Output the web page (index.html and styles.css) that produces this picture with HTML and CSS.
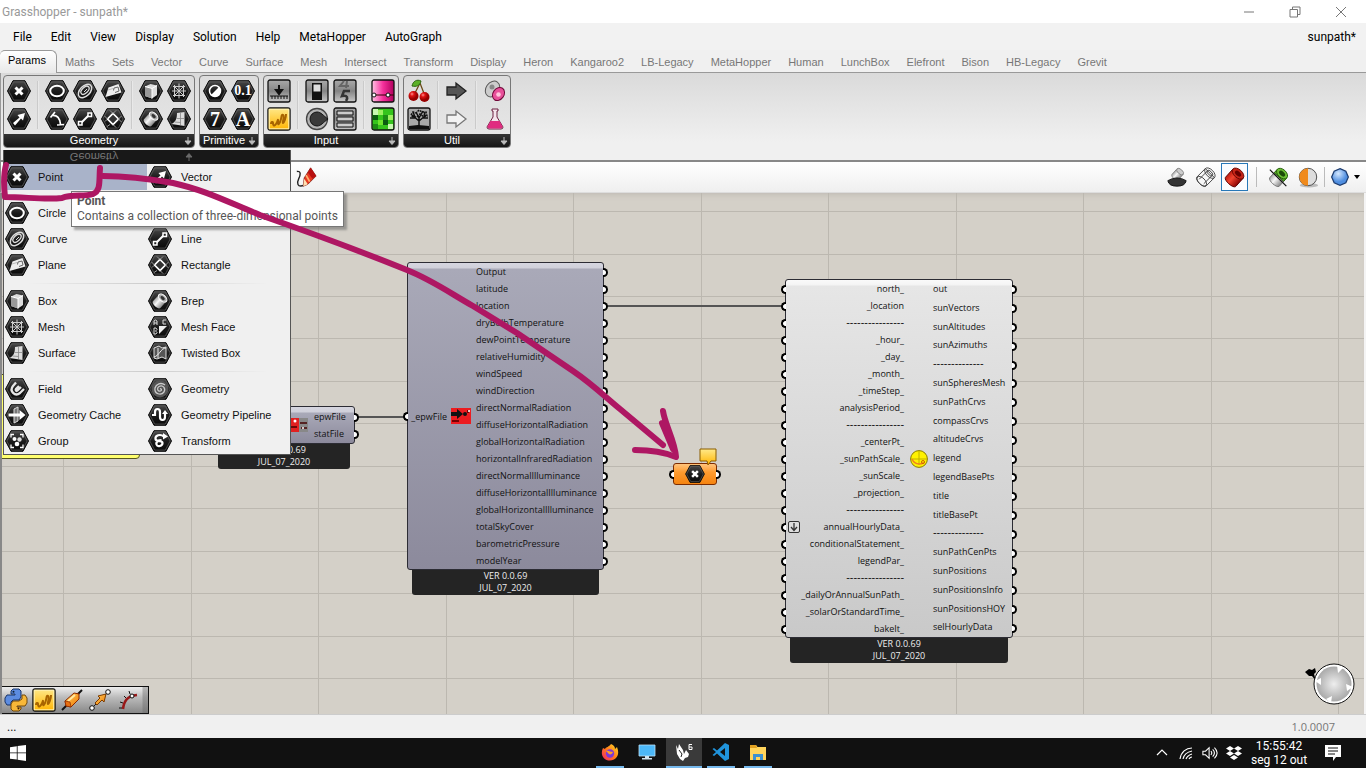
FILE: index.html
```html
<!DOCTYPE html>
<html lang="en">
<head>
<meta charset="utf-8">
<title>Grasshopper - sunpath*</title>
<link rel="stylesheet" href="styles.css">
</head>
<body>
<svg class="defs" aria-hidden="true">
  <defs>
    <linearGradient id="gHex" x1="0" y1="0" x2="0" y2="1"><stop offset="0" stop-color="#4a4a4a"/><stop offset=".5" stop-color="#1c1c1c"/><stop offset="1" stop-color="#080808"/></linearGradient>
    <linearGradient id="gBtn" x1="0" y1="0" x2="0" y2="1"><stop offset="0" stop-color="#aaa"/><stop offset=".5" stop-color="#858585"/><stop offset="1" stop-color="#c8c8c8"/></linearGradient>
    <linearGradient id="gSteel" x1="0" y1="0" x2="0" y2="1"><stop offset="0" stop-color="#aaa"/><stop offset=".4" stop-color="#f8f8f8"/><stop offset="1" stop-color="#888"/></linearGradient>
    <linearGradient id="gYel" x1="0" y1="0" x2="0" y2="1"><stop offset="0" stop-color="#ffe98a"/><stop offset="1" stop-color="#ffb400"/></linearGradient>
    <linearGradient id="gPink" x1="0" y1="0" x2="1" y2="0"><stop offset="0" stop-color="#ffc4e4"/><stop offset=".5" stop-color="#f5309c"/><stop offset="1" stop-color="#b0005c"/></linearGradient>
    <linearGradient id="gRed" x1="0" y1="0" x2="0" y2="1"><stop offset="0" stop-color="#c01c10"/><stop offset=".4" stop-color="#f04430"/><stop offset="1" stop-color="#8c0404"/></linearGradient>
    <linearGradient id="gOr" x1="0" y1="0" x2="1" y2="1"><stop offset="0" stop-color="#ffcf60"/><stop offset="1" stop-color="#f07800"/></linearGradient>
    <radialGradient id="gBlue" cx=".4" cy=".3"><stop offset="0" stop-color="#d4e8ff"/><stop offset="1" stop-color="#4f8ee0"/></radialGradient>
    <radialGradient id="gCherry" cx=".35" cy=".3"><stop offset="0" stop-color="#ff9090"/><stop offset=".4" stop-color="#e01414"/><stop offset="1" stop-color="#980000"/></radialGradient>
    <radialGradient id="gCompass"><stop offset="0" stop-color="#eee"/><stop offset="1" stop-color="#a9a9a9"/></radialGradient>
    <linearGradient id="gFox" x1="1" y1="0" x2="0" y2="1"><stop offset="0" stop-color="#ffe226"/><stop offset=".5" stop-color="#ff7a1a"/><stop offset="1" stop-color="#f0206c"/></linearGradient>
    <g id="hex"><path d="M.5 11 6 .7h12L23.500 11 18 21.300H6z" fill="url(#gHex)" stroke="#0a0a0a"/><path d="M1.800 11 6.700 1.900h10.600L22.200 11 17.300 20.100H6.700z" fill="none" stroke="#666" stroke-width=".7"/></g>
  </defs>
  <symbol id="hexagon" viewBox="0 0 24 22"><use href="#hex"/></symbol>
  <symbol id="point" viewBox="0 0 24 22"><use href="#hex"/><path d="M8.500 7.500l7 7M15.500 7.500l-7 7" stroke="#fff" stroke-width="3"/></symbol>
  <symbol id="vector" viewBox="0 0 24 22"><use href="#hex"/><path d="M6 15l6.500-5.500-2-2.500 7.500-2-2 7.500-2-2L8 17.500z" fill="#fff"/></symbol>
  <symbol id="circle" viewBox="0 0 24 22"><use href="#hex"/><ellipse cx="12" cy="11" rx="6.800" ry="5.200" fill="none" stroke="#fff" stroke-width="2"/></symbol>
  <symbol id="arc" viewBox="0 0 24 22"><use href="#hex"/><path d="M5.500 9.500L10 4M6.500 7.500c6-1 8.500 3 9 9M12 17l7-.5" fill="none" stroke="#fff" stroke-width="1.700"/></symbol>
  <symbol id="curve" viewBox="0 0 24 22"><use href="#hex"/><g fill="none" stroke="#ddd"><ellipse cx="12" cy="11" rx="8" ry="5" transform="rotate(-45 12 11)" stroke-width="1.500"/><ellipse cx="12.500" cy="10.500" rx="5" ry="2.800" transform="rotate(-45 12 11)" stroke-width="1.300"/><path d="M11 12l3-3"/></g></symbol>
  <symbol id="line" viewBox="0 0 24 22"><use href="#hex"/><path d="M8 15l8-8" stroke="#fff" stroke-width="2"/><path d="M5.500 13.500H9V17H5.500zM15 5h3.500v3.500H15z" fill="#222" stroke="#fff" stroke-width="1.500"/></symbol>
  <symbol id="plane" viewBox="0 0 24 22"><use href="#hex"/><path d="M7.500 7.500L17.500 4l3 8.500L4.500 17z" fill="#eee"/><path d="M12.500 10.500l.5-2.500 4-1 1 4-4 1.500" fill="none" stroke="#666"/><path d="M7 10l5-1.500" stroke="#bbb"/></symbol>
  <symbol id="rect" viewBox="0 0 24 22"><use href="#hex"/><path d="M12 5.500l5.500 5.500-5.500 5.500L6.500 11z" fill="#333" stroke="#fff" stroke-width="1.700"/><path d="M5.500 12l-1.500 1.500M9 16.500l-3 2M12 5.500l3-3M17.500 11l3-3M12 5.500L9 2.500M6.500 11l-3-3M12 16.500l3 3M17.500 11l3 3" stroke="#999"/></symbol>
  <symbol id="box" viewBox="0 0 24 22"><use href="#hex"/><path d="M6 6.500l5.500-2.500 6.500 1.500v9.500l-5 3.500L6 16z" fill="#ddd"/><path d="M6 6.500l7 2v10L6 16z" fill="#999"/><path d="M6 6.500l7 2 5-3M13 8.500v10" fill="none" stroke="#fff"/></symbol>
  <symbol id="mesh" viewBox="0 0 24 22"><use href="#hex"/><path d="M6 6.500h12M5 11h14M6 15.500h12M7.500 5v12M12 3.500v15M16.500 5v12M7.500 6.500l9 9M16.500 6.500l-9 9" fill="none" stroke="#ccc"/></symbol>
  <symbol id="brep" viewBox="0 0 24 22"><use href="#hex"/><g transform="rotate(-48 12 11)"><path d="M7 6h9v10H7c-3 0-3-10 0-10z" fill="url(#gSteel)"/><ellipse cx="16" cy="11" rx="3" ry="5" fill="#aaa" stroke="#fff"/><ellipse cx="16" cy="11" rx="1.500" ry="2.500" fill="#333"/></g></symbol>
  <symbol id="surface" viewBox="0 0 24 22"><use href="#hex"/><path d="M10 5l7.500-1v14L4.500 16c4-2 5.500-5 5.500-11z" fill="#ddd"/><path d="M13.500 5v12M9.500 10.500h8M7.500 14l6 .5" stroke="#888" fill="none" stroke-width=".8"/></symbol>
  <symbol id="meshface" viewBox="0 0 24 22"><use href="#hex"/><path d="M11 10h8l-8 8z" fill="#eee"/><path d="M6 9V5l1.500-1L9 5v4M6 7h3M18 4h-3v4h3M6 12v6h2l1-1.500L7.500 15 9 13.500 8 12z" fill="none" stroke="#ddd"/></symbol>
  <symbol id="twisted" viewBox="0 0 24 22"><use href="#hex"/><path d="M6 6l5-2 3 2 4-1v12l-4-2-5 2-3-1z" fill="#555" stroke="#ddd"/><path d="M6 15c5-1 7-9 12-9M10 6v10" fill="none" stroke="#eee"/></symbol>
  <symbol id="field" viewBox="0 0 24 22"><use href="#hex"/><path d="M11 4.500L8 8c-4 5 2 11 7 7l4-4M14 8l-3 3c-1 1.500.5 2.500 1.500 1.500L16 9" fill="none" stroke="#e6e6e6" stroke-width="2.300"/></symbol>
  <symbol id="spiral" viewBox="0 0 24 22"><use href="#hex"/><circle cx="12" cy="11" r="8.500" fill="#555"/><path d="M12 11c1.500-1 2 1.500.5 2-3 1-4-3-1.500-4.500 4-2 7 2 5 5.500-3 4-10 2-9-4 1-4 6-6 10-3" fill="none" stroke="#ccc" stroke-width="1.300"/></symbol>
  <symbol id="cache" viewBox="0 0 24 22"><use href="#hex"/><path d="M9 5l4-2v14l-4 2z" fill="#777" stroke="#ddd"/><path d="M3.500 9.500h11V6l6 5-6 5v-3.500h-11z" fill="#fff"/></symbol>
  <symbol id="pipeline" viewBox="0 0 24 22"><use href="#hex"/><path d="M4 11h3V8c0-4 5-4 5 0v5c0 4 5 4 5 0V9" fill="none" stroke="#fff" stroke-width="2.200"/><path d="M14 10l3-4 3 4z" fill="#fff"/></symbol>
  <symbol id="group" viewBox="0 0 24 22"><use href="#hex"/><path d="M9 4.500H6v3M15 4.500h3v3M9 17.500H6v-3M15 17.500h3v-3" fill="none" stroke="#fff" stroke-width="1.300"/><circle cx="9.500" cy="9" r="2" fill="#fff"/><circle cx="14.500" cy="9.500" r="2.200" fill="#ddd"/><circle cx="12" cy="14" r="2.300" fill="#fff"/></symbol>
  <symbol id="transform" viewBox="0 0 24 22"><use href="#hex"/><path d="M16 6.500c-4-3-9-1-8.500 2.500s7 1 7 4-5 4.500-6 1.500 3-4.500 5-4.500" fill="none" stroke="#fff" stroke-width="2.200"/><path d="M15 3l5 3.500-5 3z" fill="#fff"/></symbol>
  <symbol id="bool" viewBox="0 0 24 22"><use href="#hex"/><circle cx="12" cy="11" r="5.500" fill="none" stroke="#fff" stroke-width="1.500"/><path d="M16 7a5.500 5.500 0 0 1-8 8z" fill="#fff"/></symbol>
  <symbol id="sketch" viewBox="0 0 24 24"><rect x="1" y="1" width="22" height="22" rx="2" fill="url(#gYel)" stroke="#111" stroke-width="1.400"/><rect x="2.200" y="2.200" width="19.600" height="19.600" fill="none" stroke="#fff3b8"/><path d="M4 17c0-2 2-3 2-1s1 4 3 1 2-6 2-3 0 5 2 1 1-8 3-7-1 8 0 8 3-5 3-9" fill="none" stroke="#a86400" stroke-width="2"/></symbol>
  <symbol id="chev" viewBox="0 0 8 8"><path d="M4 0v4M1 4h6L4 7.500z" stroke="#bbb" fill="#bbb"/></symbol>
</svg>

<div class="app">
  <header class="titlebar">
    <span>Grasshopper - sunpath*</span>
    <div class="winbtns">
      <button aria-label="Minimize"><svg viewBox="0 0 12 12"><path d="M1 6h10"/></svg></button>
      <button aria-label="Restore"><svg viewBox="0 0 12 12"><path d="M1 3.500h7.500V11H1zM3.500 3V1H11v7.500H9"/></svg></button>
      <button aria-label="Close"><svg viewBox="0 0 12 12"><path d="M1 1l10 10M11 1L1 11"/></svg></button>
    </div>
  </header>

  <nav class="menubar">
    <button>File</button><button>Edit</button><button>View</button><button>Display</button><button>Solution</button><button>Help</button><button>MetaHopper</button><button>AutoGraph</button>
    <span class="docname">sunpath*</span>
  </nav>

  <nav class="tabs">
    <button class="active">Params</button><button>Maths</button><button>Sets</button><button>Vector</button><button>Curve</button><button>Surface</button><button>Mesh</button><button>Intersect</button><button>Transform</button><button>Display</button><button>Heron</button><button>Kangaroo2</button><button>LB-Legacy</button><button>MetaHopper</button><button>Human</button><button>LunchBox</button><button>Elefront</button><button>Bison</button><button>HB-Legacy</button><button>Grevit</button>
  </nav>

  <section class="ribbon">
    <div class="panel">
      <div class="tools">
        <div class="set c1"><button aria-label="Point"><svg><use href="#point"/></svg></button><button aria-label="Vector"><svg><use href="#vector"/></svg></button></div>
        <div class="set c3"><button aria-label="Circle"><svg><use href="#circle"/></svg></button><button aria-label="Curve"><svg><use href="#curve"/></svg></button><button aria-label="Plane"><svg><use href="#plane"/></svg></button><button aria-label="Arc"><svg><use href="#arc"/></svg></button><button aria-label="Line"><svg><use href="#line"/></svg></button><button aria-label="Rectangle"><svg><use href="#rect"/></svg></button></div>
        <div class="set c2"><button aria-label="Box"><svg><use href="#box"/></svg></button><button aria-label="Mesh"><svg><use href="#mesh"/></svg></button><button aria-label="Brep"><svg><use href="#brep"/></svg></button><button aria-label="Surface"><svg><use href="#surface"/></svg></button></div>
      </div>
      <div class="label">Geometry<svg class="more"><use href="#chev"/></svg></div>
    </div>
    <div class="panel">
      <div class="tools">
        <div class="set c2"><button aria-label="Boolean"><svg><use href="#bool"/></svg></button><button class="lettered" aria-label="Number"><svg><use href="#hexagon"/></svg><span class="glyph">0.1</span></button><button class="lettered" aria-label="Integer"><svg><use href="#hexagon"/></svg><span class="glyph glyph-lg">7</span></button><button class="lettered" aria-label="Text"><svg><use href="#hexagon"/></svg><span class="glyph glyph-lg">A</span></button></div>
      </div>
      <div class="label">Primitive<svg class="more"><use href="#chev"/></svg></div>
    </div>
    <div class="panel">
      <div class="tools">
        <div class="set c1">
          <button aria-label="Button"><svg viewBox="0 0 24 24"><rect x="1" y="1" width="22" height="22" rx="2" fill="url(#gBtn)" stroke="#111" stroke-width="1.300"/><path d="M12 6v6M9 11h6l-3 4z" stroke="#111" stroke-width="2" fill="#111"/><path d="M3 17h18M5 17v3M8 17v3M11 17v3M14 17v3M17 17v3M20 17v3" stroke="#111"/></svg></button>
          <button aria-label="Sketch"><svg><use href="#sketch"/></svg></button>
        </div>
        <div class="set c2">
          <button aria-label="Toggle"><svg viewBox="0 0 24 24"><rect x="1" y="1" width="22" height="22" rx="2" fill="url(#gBtn)" stroke="#111" stroke-width="1.300"/><rect x="7" y="4" width="10" height="17" fill="#111"/><rect x="8.500" y="5.500" width="7" height="7" fill="#ddd"/></svg></button>
          <button aria-label="Digit scroller"><svg viewBox="0 0 24 24"><rect x="1" y="1" width="22" height="22" rx="2" fill="url(#gBtn)" stroke="#111" stroke-width="1.300"/><path d="M11 2L7 7h9M14 2l-1 7" fill="none" stroke="#666" stroke-width="2"/><path d="M17 12h-6l-2 5c6-1 6 2 4 5" fill="none" stroke="#333" stroke-width="2.600"/></svg></button>
          <button aria-label="Knob"><svg viewBox="0 0 24 24"><circle cx="12" cy="12" r="10.500" fill="#b4b4b4" stroke="#444" stroke-width="1.300"/><path d="M12 5a7 7 0 1 0 0 14c4 0 6-3.500 11-7-5-3.500-7-7-11-7z" fill="#3a3a3a" stroke="#111"/></svg></button>
          <button aria-label="Value list"><svg viewBox="0 0 24 24"><rect x="1" y="1" width="22" height="22" rx="2" fill="url(#gBtn)" stroke="#111" stroke-width="1.300"/><path d="M4 4h16v4H4zM4 10h16v4H4zM4 16h16v4H4z" fill="#ccc" stroke="#111"/></svg></button>
        </div>
        <div class="set c1">
          <button aria-label="Gradient"><svg viewBox="0 0 24 24"><rect x="1" y="1" width="22" height="22" rx="2" fill="url(#gPink)" stroke="#111" stroke-width="1.300"/><path d="M1 16h22" stroke="#300"/><circle cx="3" cy="16" r="2" fill="#fff" stroke="#111"/><circle cx="17" cy="16" r="2" fill="#fff" stroke="#111"/></svg></button>
          <button aria-label="Image sampler"><svg viewBox="0 0 24 24"><rect x="1" y="1" width="22" height="22" rx="2" fill="#35c41c" stroke="#111" stroke-width="1.300"/><path d="M2 8h5v5H2zM12 13h5v5h-5z" fill="#0b5c10"/><path d="M7 3h5v5H7zM17 8h5v5h-5z" fill="#9df060"/><path d="M12 8h5v5h-5zM2 17h5v5H2z" fill="#1c8c14"/><path d="M17 17h5v5h-5zM2 2h5v6H2z" fill="#c8f8b0"/><path d="M7 13h5v5H7z" fill="#6fe52e"/></svg></button>
        </div>
      </div>
      <div class="label">Input<svg class="more"><use href="#chev"/></svg></div>
    </div>
    <div class="panel">
      <div class="tools">
        <div class="set c1">
          <button aria-label="Cherry picker"><svg viewBox="0 0 24 24"><path d="M7 16L13 4l5 13" fill="none" stroke="#6a4a18" stroke-width="1.300"/><path d="M14 2C10 0 6 2 5 7c4 1 8 0 9-5z" fill="#5cb028" stroke="#2c6410"/><circle cx="6.500" cy="17" r="5" fill="url(#gCherry)"/><circle cx="17.500" cy="18" r="5" fill="url(#gCherry)"/></svg></button>
          <button aria-label="Param viewer"><svg viewBox="0 0 24 24"><rect x="1" y="1" width="22" height="22" rx="2" fill="#aaa" stroke="#111" stroke-width="1.300"/><path d="M12 20V9M12 14L5 8M12 14l7-6M12 11L9 5M12 11l4-7M8 11H3M16 11h5M8 10L6 5M17 9l1-4" stroke="#111" stroke-width="1.500"/><path d="M4 8l2-3 3 1 3-3 3 2 4 0 1 4-3 1-4-3-3 3-4 0z" fill="none" stroke="#111" stroke-dasharray="2 1" stroke-width="1.500"/><path d="M2 22v-3l9-1 11 1v3z" fill="#111"/></svg></button>
        </div>
        <div class="set c1">
          <button aria-label="Data input"><svg viewBox="0 0 24 24"><path d="M2 8h9V4l10 8-10 8v-4H2z" fill="#555" stroke="#222" stroke-width="1.300"/></svg></button>
          <button aria-label="Data output"><svg viewBox="0 0 24 24"><path d="M2 8h9V4l10 8-10 8v-4H2z" fill="#f2f2f2" stroke="#777" stroke-width="1.300"/></svg></button>
        </div>
        <div class="set c1">
          <button aria-label="Fitness"><svg viewBox="0 0 24 24"><ellipse cx="9.500" cy="10" rx="6.500" ry="8.500" transform="rotate(35 9.500 10)" fill="#ccc" stroke="#555"/><circle cx="9" cy="8" r="2.500" fill="#888"/><ellipse cx="15.500" cy="15" rx="5.500" ry="7" transform="rotate(35 15.500 15)" fill="#e8509a" stroke="#700838"/><circle cx="15.500" cy="15.500" r="2.300" fill="#ffc4dc"/></svg></button>
          <button aria-label="Lab"><svg viewBox="0 0 24 24"><path d="M9 2h6v2h-1v6l6 10q0 2-2 2H6q-2 0-2-2l6-10V4H9z" fill="#f4e4ec" stroke="#6c2040"/><path d="M7.500 14h9l3 5.500q0 2-2 2H6.500q-2 0-2-2z" fill="#e02c80"/></svg></button>
        </div>
      </div>
      <div class="label">Util<svg class="more"><use href="#chev"/></svg></div>
    </div>
  </section>

  <section class="toolbar">
    <button class="pen" aria-label="Sketch pen"><svg viewBox="0 0 24 24"><path d="M2 6c5-1 4 4 2 8s-2 10 6 7" fill="none" stroke="#222" stroke-width="1.500"/><path d="M10 13L17 2l6 9-9 9-5 2z" fill="#e83820" stroke="#701008" stroke-width=".8"/><path d="M17 2l6 9-4 3-5-7z" fill="#b81010"/><path d="M12 10l4 7" stroke="#ffb070" stroke-width="2"/><path d="M10 14l4 6-5 2z" fill="#ffe0b0"/></svg></button>
    <div class="views">
      <button aria-label="No preview"><svg viewBox="0 0 24 24"><g transform="rotate(-48 13 8)"><path d="M8 4h8v9H8c-3 0-3-9 0-9z" fill="url(#gSteel)" stroke="#888"/><ellipse cx="16" cy="8.500" rx="2.500" ry="4.500" fill="#ccc" stroke="#888"/></g><path d="M2 16q10-6 20 0-1 6-10 6T2 16z" fill="#333" stroke="#111"/></svg></button>
      <button aria-label="Wireframe preview"><svg viewBox="0 0 24 24" fill="none" stroke="#444"><g transform="rotate(-45 12 12)"><path d="M5 5h13v14H5c-4 0-4-14 0-14z" fill="#f8f8f8"/><ellipse cx="18" cy="12" rx="4" ry="7"/><ellipse cx="18" cy="12" rx="2" ry="4"/><ellipse cx="5.500" cy="12" rx="3.500" ry="6.500"/><path d="M5 8.500h13M5 15.500h13"/></g></svg></button>
      <button class="on" aria-label="Shaded preview"><svg viewBox="0 0 24 24"><g transform="rotate(-48 12 12)"><path d="M5 4.500h12v15H5c-4 0-4-15 0-15z" fill="url(#gRed)" stroke="#5c0000"/><ellipse cx="17" cy="12" rx="4.500" ry="7.500" fill="#c42418" stroke="#6c0800"/><ellipse cx="17" cy="12" rx="2.300" ry="4" fill="#600"/></g></svg></button>
      <i class="bar"></i>
      <button aria-label="Selected only"><svg viewBox="0 0 24 24"><g transform="rotate(-48 12 12)"><path d="M5 5h7v14H5c-4 0-4-14 0-14z" fill="url(#gSteel)" stroke="#777"/><path d="M12 5h5v14h-5z" fill="#5cb028" stroke="#245c08"/><ellipse cx="17" cy="12" rx="4.500" ry="7" fill="#6cc034" stroke="#245c08"/><ellipse cx="17" cy="12" rx="2.300" ry="4" fill="#1c4c08"/></g><path d="M2 4l18 18" stroke="#111" stroke-width="1.300"/></svg></button>
      <button aria-label="Preview colours"><svg viewBox="0 0 24 24"><ellipse cx="13" cy="21" rx="10" ry="2.500" fill="#bbb"/><circle cx="12" cy="12" r="9.500" fill="#ddd" stroke="#444"/><path d="M12 2.500a9.500 9.500 0 0 0 0 19z" fill="#f08a1c"/></svg></button>
      <i class="bar short"></i>
      <button class="sphere" aria-label="Preview quality"><svg viewBox="0 0 24 24"><path d="M12 2l7 3 3 7-3 7-7 3-7-3-3-7 3-7z" fill="url(#gBlue)" stroke="#1c3c70" stroke-width="1.500"/></svg><svg class="caret" viewBox="0 0 6 4"><path d="M0 0h6L3 4z"/></svg></button>
    </div>
  </section>

  <main class="canvas">
    <svg class="wires" aria-hidden="true">
      <path class="grid" d="M63.500 0v530M191.500 0v530M318.500 0v530M446.500 0v530M573.500 0v530M701.500 0v530M828.500 0v530M956.500 0v530M1083.500 0v530M1211.500 0v530M1338.500 0v530M0 18.500h2000M0 61.500h2000M0 103.500h2000M0 145.500h2000M0 188.500h2000M0 230.500h2000M0 273.500h2000M0 315.500h2000M0 358.500h2000M0 400.500h2000M0 443.500h2000M0 485.500h2000"/>
      <path class="wire" d="M357 224h48M606 113h177"/>
    </svg>
    <div class="yellow-panel"></div>

    <article class="node lilac node-open">
      <div class="body">
        <ul class="ins"></ul>
        <svg class="nicon" viewBox="0 0 20 16"><path d="M0 1h10v14H0z" fill="#e02020"/><path d="M10 1h9v14h-9z" fill="#888"/><path d="M2 10h6M11 6h7M12 11h6" stroke="#400" stroke-width="1.500"/><circle cx="6" cy="4" r="1.500" fill="#fff"/><circle cx="14" cy="11" r="1" fill="#fff"/></svg>
        <ul class="outs"><li>epwFile</li><li>statFile</li></ul>
      </div>
      <div class="ver">VER 0.0.69<br>JUL_07_2020</div>
    </article>

    <article class="node lilac node-epw">
      <div class="body">
        <ul class="ins"><li class="one">_epwFile</li></ul>
        <svg class="nicon" viewBox="0 0 20 16"><path d="M0 0h20v16H0z" fill="#ec1c20"/><path d="M0 4h6V1l6 5-6 5V8H0z" fill="#111"/><circle cx="14" cy="6" r="2" fill="#111"/><path d="M1 13h7M17 2v3" stroke="#700" stroke-width="2"/><circle cx="18" cy="3" r="1" fill="#fff"/></svg>
        <ul class="outs"><li>Output</li><li>latitude</li><li>location</li><li>dryBulbTemperature</li><li>dewPointTemperature</li><li>relativeHumidity</li><li>windSpeed</li><li>windDirection</li><li>directNormalRadiation</li><li>diffuseHorizontalRadiation</li><li>globalHorizontalRadiation</li><li>horizontalInfraredRadiation</li><li>directNormalIlluminance</li><li>diffuseHorizontalIlluminance</li><li>globalHorizontalIlluminance</li><li>totalSkyCover</li><li>barometricPressure</li><li>modelYear</li></ul>
      </div>
      <div class="ver">VER 0.0.69<br>JUL_07_2020</div>
    </article>

    <article class="point-param"><svg><use href="#point"/></svg></article>
    <svg class="balloon" viewBox="0 0 18 18"><path d="M1 1h16v12h-5l-3 4-1-4H1z" fill="url(#gYel)" stroke="#8a5c00"/></svg>

    <article class="node silver node-sun">
      <div class="body">
        <ul class="ins"><li>north_</li><li>_location</li><li class="dash">----------------</li><li>_hour_</li><li>_day_</li><li>_month_</li><li>_timeStep_</li><li>analysisPeriod_</li><li class="dash">----------------</li><li>_centerPt_</li><li>_sunPathScale_</li><li>_sunScale_</li><li>_projection_</li><li class="dash">----------------</li><li>annualHourlyData_</li><li>conditionalStatement_</li><li>legendPar_</li><li class="dash">----------------</li><li>_dailyOrAnnualSunPath_</li><li>_solarOrStandardTime_</li><li>bakeIt_</li></ul>
        <svg class="nicon" viewBox="0 0 18 18"><circle cx="9" cy="9" r="8.400" fill="#fff200" stroke="#8a7c00"/><path d="M9 1v14M1 9h16" stroke="#c0b000"/><path d="M2 9q3 7 12 4" fill="none" stroke="#f08020" stroke-width="1.500"/><circle cx="13" cy="12" r="1.500" fill="none" stroke="#d06000"/></svg>
        <ul class="outs"><li>out</li><li>sunVectors</li><li>sunAltitudes</li><li>sunAzimuths</li><li class="dash">--------------</li><li>sunSpheresMesh</li><li>sunPathCrvs</li><li>compassCrvs</li><li>altitudeCrvs</li><li>legend</li><li>legendBasePts</li><li>title</li><li>titleBasePt</li><li class="dash">--------------</li><li>sunPathCenPts</li><li>sunPositions</li><li>sunPositionsInfo</li><li>sunPositionsHOY</li><li>selHourlyData</li></ul>
        <svg class="graft" viewBox="0 0 12 12"><rect x=".5" y=".5" width="11" height="11" rx="1.500" fill="#ddd" stroke="#333"/><path d="M6 2v7M3 6l3 3.500L9 6" fill="none" stroke="#333" stroke-width="1.300"/></svg>
      </div>
      <div class="ver">VER 0.0.69<br>JUL_07_2020</div>
    </article>

    <svg class="compass" viewBox="0 0 52 44"><path d="M1 10l4-3 3 1 3-2 1 4-2 2 2 7-4-5-3 0z" fill="#000"/><circle cx="30" cy="22" r="20" fill="#fff" stroke="#111"/><circle cx="30" cy="22" r="17.500" fill="url(#gCompass)"/><path d="M33 3l6 3-5 5zM11 19l6-3 0 7zM49 25l-6 4-1-7zM27 41l-5-4 6-3z" fill="#fff"/></svg>

    <div class="recent">
      <button aria-label="Python"><svg viewBox="0 0 24 24"><path d="M9 1h6l2 2v6l-2 3H9l-2 2v3H3l-2-3v-4l2-3h8V6H7V3z" fill="#5c8ce0" stroke="#183468"/><path d="M15 23H9l-2-2v-5l2-3h6l3-2V7h3l2 3v5l-2 3h-8v1h4v2z" fill="#f8b838" stroke="#70480c"/><circle cx="9.500" cy="3.800" r="1" fill="#123"/><circle cx="14.500" cy="20.500" r="1" fill="#420"/></svg></button>
      <button aria-label="Sketch"><svg><use href="#sketch"/></svg></button>
      <button aria-label="Curve length"><svg viewBox="0 0 24 24"><path d="M2 22L22 2" stroke="#111" stroke-width="2"/><path d="M5 13l9-8 5 1v5l-8 8-5-1z" fill="url(#gOr)" stroke="#8a2800"/><path d="M8 13l7-6" stroke="#ffe8a0" stroke-width="2"/><path d="M5 13l5 1 1 5-5-1z" fill="#e87010" stroke="#8a2800" stroke-width=".7"/></svg></button>
      <button aria-label="Vector two points"><svg viewBox="0 0 24 24"><path d="M4 20L20 4" stroke="#222"/><path d="M7 15l5-5-2-2 8-2-2 8-2-2-5 5z" fill="url(#gOr)" stroke="#7c3c00"/><circle cx="4" cy="20" r="2.300" fill="#fff" stroke="#111"/><circle cx="20" cy="4" r="2.300" fill="#fff" stroke="#111"/></svg></button>
      <button aria-label="Evaluate curve"><svg viewBox="0 0 24 24"><path d="M7 21C8 13 11 8 21 7" fill="none" stroke="#981818" stroke-width="2.500"/><path d="M3 20h3M4 14l3 1M8 8l2 2M13 3l1 3" stroke="#111"/><circle cx="16" cy="8" r="2" fill="#fff" stroke="#111"/></svg></button>
    </div>
  </main>

  <footer class="status"><span>...</span><span class="version">1.0.0007</span></footer>

  <footer class="taskbar">
    <button class="start" aria-label="Start"><svg viewBox="0 0 16 16"><path d="M0 2.200L6.800 1.200v6.300H0zM7.600 1.100L16 0v7.500H7.600zM0 8.300h6.800v6.300L0 13.700zM7.600 8.300H16V16l-8.400-1.200z" fill="#fff"/></svg></button>
    <div class="apps">
      <button class="run" aria-label="Firefox"><svg viewBox="0 0 18 18"><path d="M10 1c3 1 4 3 4 5l2-2c3 7 0 13-7 13.500C2 17.500-1 11 2 5l2 1c1-2 4-2 6-5z" fill="url(#gFox)"/><circle cx="9" cy="10.500" r="4.200" fill="#7c38d8"/><path d="M5 8c3-1 4 1 7 1-1 3-4 3-5 1z" fill="#ffa020"/></svg></button>
      <button aria-label="Computer"><svg viewBox="0 0 18 18"><path d="M1 2h16v11H1z" fill="#4cb8f8" stroke="#b8e0f8" stroke-width=".8"/><path d="M7 13h4v2H7zM4 15h10v1.500H4z" fill="#d0e4f0"/></svg></button>
      <button class="run active" aria-label="Rhino"><svg viewBox="0 0 18 18"><path d="M1 2l2 4 1-5 4 6 1 4 2-4 3 4-1 3-3 1-2 3-3-2-3-5z" fill="#fff"/><path d="M4 7l3 4-1 3" stroke="#222" fill="none"/><path d="M17 1.500h-3v5h3v-2.500h-3" fill="none" stroke="#fff"/></svg></button>
      <button class="run" aria-label="Visual Studio Code"><svg viewBox="0 0 18 18"><path d="M13 0l4 2v14l-4 2-8-7.500L2 13l-1.500-1L4 9 .5 6 2 5l3 2.500zM13 5L8 9l5 4z" fill="#2094dc"/></svg></button>
      <button class="run" aria-label="File Explorer"><svg viewBox="0 0 18 18"><path d="M1 2h6l1.500 2H17v13H1z" fill="#ffd45c"/><path d="M1 2h6l1 3H1z" fill="#e0a020"/><path d="M4 17v-6h10v6h-3v-3H7v3z" fill="#3c90d0"/></svg></button>
    </div>
    <div class="tray">
      <svg viewBox="0 0 16 16"><path d="M3 10l5-5 5 5" class="ln"/></svg>
      <svg viewBox="0 0 16 16"><path d="M2 14C3 7 8 3 14 3M5 14c1-5 4-7 9-8M8 14c1-3 3-4 6-5M11 14q1-2 3-2" class="ln"/></svg>
      <svg viewBox="0 0 18 16"><path d="M1 6h3l4-4v12l-4-4H1zM10 6q2 2 0 4M12 4q4 4 0 8M14 2q6 6 0 12" class="ln"/></svg>
      <svg viewBox="0 0 16 16"><path d="M4 1l4 2.500L4 6 0 3.500zM12 1l4 2.500L12 6 8 3.500zM4 6l4 2.500L4 11 0 8.500zM12 6l4 2.500L12 11 8 8.500zM8 10l4 2.500L8 15l-4-2.500z" fill="#fff"/></svg>
      <time>15:55:42<br>seg 12 out</time>
      <svg class="note" viewBox="0 0 18 18"><path d="M1 1h16v12h-5l-3 4v-4H1z" fill="#fff"/><path d="M4 4h10M4 7h10M4 10h7" stroke="#111"/></svg>
    </div>
  </footer>

  <aside class="dropdown">
    <div class="reflect"><span>Geometry</span><svg class="more"><use href="#chev"/></svg></div>
    <div class="rows">
      <button class="hot"><svg><use href="#point"/></svg>Point</button><button><svg><use href="#vector"/></svg>Vector</button>
      <hr>
      <button class="left"><svg><use href="#circle"/></svg>Circle</button>
      <button class="left"><svg><use href="#curve"/></svg>Curve</button><button><svg><use href="#line"/></svg>Line</button>
      <button><svg><use href="#plane"/></svg>Plane</button><button><svg><use href="#rect"/></svg>Rectangle</button>
      <hr>
      <button><svg><use href="#box"/></svg>Box</button><button><svg><use href="#brep"/></svg>Brep</button>
      <button><svg><use href="#mesh"/></svg>Mesh</button><button><svg><use href="#meshface"/></svg>Mesh Face</button>
      <button><svg><use href="#surface"/></svg>Surface</button><button><svg><use href="#twisted"/></svg>Twisted Box</button>
      <hr>
      <button><svg><use href="#field"/></svg>Field</button><button><svg><use href="#spiral"/></svg>Geometry</button>
      <button><svg><use href="#cache"/></svg>Geometry Cache</button><button><svg><use href="#pipeline"/></svg>Geometry Pipeline</button>
      <button><svg><use href="#group"/></svg>Group</button><button><svg><use href="#transform"/></svg>Transform</button>
    </div>
  </aside>

  <div class="tooltip" role="tooltip"><b>Point</b><span>Contains a collection of three-dimensional points</span></div>

  <svg class="ink" aria-hidden="true">
    <path d="M6 165C3 176 4 188 5 197C25 197 46 200 62 198C72 194 84 197 93 194C101 191 99 181 100 168"/>
    <path d="M103 176C125 176 150 179 173 183C205 190 230 203 260 215C300 229 350 247 407 270C432 280 450 293 473 306L517 333L573 371C592 384 602 394 620 409L663 445"/>
    <path d="M635 450C652 450 664 452 676 457C675 441 665 425 663 411M662 423L673 449"/>
  </svg>
</div>
</body>
</html>
```
FILE: styles.css
```css
*, *::before, *::after { box-sizing: border-box; }
body { margin: 0; font: 12px Roboto, "Open Sans", sans-serif; color: #111; background: #f0f0f0; }
button { border: 0; margin: 0; padding: 0; background: none; font: inherit; color: inherit; display: flex; align-items: center; justify-content: center; white-space: nowrap; }
ul { list-style: none; margin: 0; padding: 0; }
svg { display: block; flex: none; }
.defs { position: absolute; width: 0; height: 0; }
.lettered { position: relative; }
.glyph { position: absolute; inset: 0; font: bold 14px/24px "Liberation Serif", serif; color: #fff; text-align: center; }
.glyph-lg { font-size: 20px; }

.app { position: relative; display: flex; flex-direction: column; height: 100vh; overflow: hidden; }

.titlebar { display: flex; align-items: center; justify-content: space-between; height: 23px; padding-left: 2px; background: #fff; color: #999; }
.winbtns { display: flex; margin-right: 2px; }
.winbtns button { width: 46px; height: 22px; }
.winbtns svg { width: 12px; height: 12px; fill: none; stroke: #777; }

.menubar { display: flex; align-items: center; height: 27px; padding: 0 10px 0 3px; background: #f2f2f2; color: #000; }
.menubar button { padding: 0 9px 0 10px; height: 27px; }
.docname { margin-left: auto; }

.tabs { display: flex; height: 23px; border-bottom: 1px solid #999; background: #f0f0f0; font: 11px "Liberation Sans", Arial, sans-serif; color: #777; }
.tabs button { padding: 1px 9px 0 8px; height: 22px; }
.tabs .active { height: 23px; padding: 0 10px 4px 8px; border: 1px solid #999; border-left: 0; border-bottom: 0; border-radius: 5px 6px 0 0; background: linear-gradient(#fff, #e8e8e8); color: #000; }

.ribbon { display: flex; align-items: flex-start; gap: 4px; height: 87px; padding: 2px 3px 0 2px; background: linear-gradient(#dadada, #f0f0f0 80%); border-left: 1px solid #999; }
.panel { border: 1px solid #777; border-radius: 4px; overflow: hidden; background: linear-gradient(#dcdcdc, #e8e8e8); }
.tools { display: flex; gap: 14px; padding: 3px; }
.set { display: grid; gap: 4px; position: relative; }
.set + .set::before { content: ""; position: absolute; left: -8px; top: 2px; bottom: 2px; width: 2px; background: linear-gradient(90deg, #bbb, #f8f8f8); }
.c1 { grid-template-columns: 24px; }
.c2 { grid-template-columns: 24px 24px; }
.c3 { grid-template-columns: 24px 24px 24px; }
.set button, .set svg { width: 24px; height: 24px; }
.label { position: relative; height: 13px; padding-right: 10px; background: linear-gradient(#333, #151515); color: #fff; font: 11px/13px "Liberation Sans", Arial, sans-serif; text-align: center; }
.more { position: absolute; right: 2px; top: 3px; width: 8px; height: 8px; }

.toolbar { display: flex; align-items: center; justify-content: space-between; height: 33px; padding-right: 5px; border-top: 2px solid #888; border-left: 1px solid #888; background: linear-gradient(#fff, #efefef); border-bottom: 1px solid #ddd; }
.toolbar svg { width: 22px; height: 22px; }
.pen { margin-left: 294px; }
.views { display: flex; align-items: center; gap: 2px; }
.views button { width: 27px; height: 28px; }
.views .on { border: 1px solid #2878b8; background: #fafcff; }
.bar { width: 1px; height: 20px; margin: 0 6px; background: #bbb; }
.short { margin: 0 1px; }
.views .sphere { width: 33px; gap: 4px; }
.sphere svg { width: 20px; height: 20px; }
.views .sphere .caret { width: 6px; height: 4px; }

.canvas { position: relative; flex: 1; overflow: hidden; background: #d4d0c8; border-left: 2px solid #888; border-right: 2px solid #f4f4f4; box-shadow: inset 0 6px 6px -5px #bbb7b0; }
.wires { position: absolute; left: -2px; top: 0; width: calc(100% + 2px); height: 100%; }
.grid { fill: none; stroke: #bcb8b0; }
.wire { fill: none; stroke: #555; stroke-width: 2; }
.yellow-panel { position: absolute; left: -2px; top: 181px; width: 140px; height: 85px; background: #ffff6e; border: 1px solid #55551c; border-radius: 0 0 4px 0; }

.node { position: absolute; font: 9px "Open Sans", "Noto Sans", sans-serif; }
.body { position: relative; display: flex; align-items: stretch; border: 1px solid #2c2c34; border-radius: 3px; }
.lilac .body { background: linear-gradient(#d6d6e0 0, #d0d0da 5px, #a9a9b8 6px, #8c8a9c); }
.silver .body { background: linear-gradient(#fafafa 0, #f4f4f4 5px, #e6e6e6 6px, #c9c9c9); }
.ver { margin: 0 5px; padding: 0 0 1px; border-radius: 0 0 3px 3px; background: #242424; color: #eee; line-height: 12px; text-align: center; }
.node ul { display: flex; flex-direction: column; }
.node li { position: relative; flex: 1 0 17px; line-height: 17px; white-space: nowrap; }
.node .ins .one { flex: none; margin: auto 0; }
.node .dash { font-family: "DejaVu Sans", sans-serif; font-size: 10px; }
.node .outs { flex: 1; }
.ins { text-align: right; }
.node li::after, .point-param::before, .point-param::after { content: ""; position: absolute; top: calc(50% - 4px); width: 5px; height: 9px; border: 2px solid #000; background: #fff; }
.node .outs li::after, .point-param::after { right: -5px; border-left: 0; border-radius: 0 5px 5px 0; }
.node .ins li::after, .point-param::before { left: -5px; border-right: 0; border-radius: 5px 0 0 5px; }
.nicon { align-self: center; margin: 0 5px; width: 20px; height: 16px; }

.node-open { left: 211px; top: 213px; width: 142px; }
.node-open .body { padding: 1px 0; }
.node-open .ins { width: 70px; }
.node-epw { left: 405px; top: 69px; width: 197px; }
.node-epw .ins { width: 39px; }
.node-epw .nicon { margin: 0 5px 0 4px; }
.node-sun { left: 783px; top: 86px; width: 228px; }
.node-sun .ins { width: 118px; }
.node-sun .nicon { width: 18px; height: 18px; margin-left: 6px; }
.graft { position: absolute; left: 2px; top: 241px; width: 12px; height: 12px; }

.point-param { position: absolute; left: 671px; top: 270px; width: 44px; height: 22px; display: flex; align-items: center; justify-content: center; border: 1px solid #7c2c00; border-radius: 3px; background: linear-gradient(#ffc47c, #ff9c30 40%, #f58410); }
.point-param svg { width: 20px; height: 18px; }
.balloon { position: absolute; left: 697px; top: 255px; width: 18px; height: 18px; }

.compass { position: absolute; right: 8px; bottom: 8px; width: 52px; height: 44px; }
.recent { position: absolute; left: 0; bottom: 0; display: flex; align-items: center; gap: 4px; height: 28px; padding: 0 8px 0 2px; border: 1px solid #111; border-width: 1px 1px 1px 0; background: linear-gradient(90deg, transparent 140px, #6666 141px), linear-gradient(#eee, #bbb 40%, #888); }
.recent svg { width: 24px; height: 24px; }

.status { display: flex; align-items: center; justify-content: space-between; height: 24px; padding: 0 31px 0 7px; border-top: 1px solid #ccc; box-shadow: 0 -1px #fff; background: #f0f0f0; }
.version { color: #777; font: 11px "Open Sans", sans-serif; }

.taskbar { display: flex; align-items: stretch; height: 30px; background: #111; color: #fff; }
.start { width: 36px; }
.start svg { width: 16px; height: 16px; }
.apps { display: flex; gap: 1px; margin: 0 auto 0 556px; }
.apps button { width: 36px; border-bottom: 2px solid transparent; }
.apps svg { width: 18px; height: 18px; }
.apps .run { background: linear-gradient(#76b9ed, #76b9ed) center bottom / 28px 2px no-repeat border-box; }
.apps .active { background: #3a3a3a; border-color: #76b9ed; }
.tray { display: flex; align-items: center; gap: 8px; padding-right: 24px; }
.tray svg { width: 16px; height: 16px; }
.tray .note { width: 18px; height: 18px; margin-left: 8px; }
.ln { fill: none; stroke: #fff; stroke-width: 1.2; }
.tray time { width: 58px; line-height: 14px; text-align: center; }

.dropdown { position: absolute; left: 3px; top: 150px; width: 288px; background: #f0f0f0; border: 1px solid #555; border-top: 0; font: 11px "Liberation Sans", Arial, sans-serif; }
.reflect { position: relative; height: 14px; background: #181818; color: #777; line-height: 14px; text-align: center; padding-right: 106px; transform: scaleY(-1); }
.reflect .more { right: 97px; opacity: .5; }
.rows { display: grid; grid-template-columns: 1fr 1fr; }
.rows button { height: 26px; gap: 9px; justify-content: flex-start; padding-left: 1px; }
.rows svg { width: 24px; height: 22px; }
.rows .hot { background: #a9b3c9; }
.rows .left { grid-column: 1; }
.rows hr { grid-column: 1 / 3; width: 240px; height: 1px; margin: 5px auto 4px 24px; border: 0; background: linear-gradient(90deg, transparent, #ccc, transparent); }

.tooltip { position: absolute; left: 71px; top: 191px; display: flex; flex-direction: column; padding: 2px 5px; border: 1px solid #777; background: #fff; box-shadow: 3px 3px 2px #6668; color: #575757; line-height: 15px; }

.ink { position: absolute; left: 0; top: 0; width: 100%; height: 100%; pointer-events: none; fill: none; stroke: #ae1763; stroke-width: 6; stroke-linecap: round; stroke-linejoin: round; }
```
